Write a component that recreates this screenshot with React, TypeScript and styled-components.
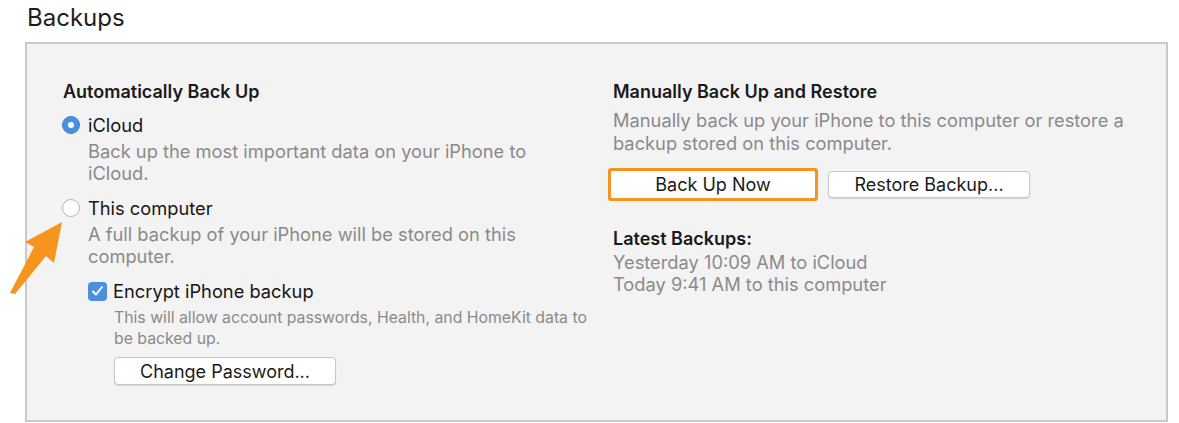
import React from "react";
import styled, { createGlobalStyle } from "styled-components";

const Global = createGlobalStyle`
  html, body { margin: 0; padding: 0; background: #ffffff; }
  body { font-family: Inter, "Liberation Sans", Arial, sans-serif; color: #1c1c1c; }
`;

const Page = styled.div`
  position: relative;
  width: 1179px;
  height: 423px;
  padding: 3px 0 0 27px;
  box-sizing: border-box;
`;

const Title = styled.h1`
  margin: 0;
  font-size: 24px;
  font-weight: 400;
  line-height: 30px;
  color: #1e1e1e;
`;

const Panel = styled.div`
  margin: 9px 0 0 -2px;
  width: 1143px;
  height: 380px;
  box-sizing: border-box;
  border: 2px solid #c9c9c9;
  background: #f3f3f3;
  padding: 36px 0 0 35px;
  display: grid;
  grid-template-columns: 550px 1fr;
`;

const Column = styled.div`
  display: flex;
  flex-direction: column;
`;

const Heading = styled.div`
  font-size: 18px;
  font-weight: 600;
  line-height: 24px;
  color: #1a1a1a;
  margin-left: 1px;
`;

const OptionRow = styled.div<{ $top: number }>`
  display: flex;
  align-items: center;
  gap: 8px;
  margin-top: ${(p) => p.$top}px;
  font-size: 18.3px;
  line-height: 22px;
  color: #161616;
`;

const Radio = styled.span<{ $checked?: boolean }>`
  width: 18px;
  height: 18px;
  border-radius: 50%;
  box-sizing: border-box;
  display: inline-flex;
  align-items: center;
  justify-content: center;
  background: ${(p) => (p.$checked ? "#4b8fde" : "#ffffff")};
  border: 1px solid ${(p) => (p.$checked ? "#3f82d3" : "#b5b5b5")};
  &::after {
    content: "";
    display: ${(p) => (p.$checked ? "block" : "none")};
    width: 6px;
    height: 6px;
    border-radius: 50%;
    background: #ffffff;
  }
`;

const Desc = styled.div<{ $indent: number; $size?: number; $lh?: number; $top?: number }>`
  margin-left: ${(p) => p.$indent}px;
  margin-top: ${(p) => p.$top ?? 0}px;
  font-size: ${(p) => p.$size ?? 18.3}px;
  line-height: ${(p) => p.$lh ?? 22}px;
  color: #8a8a8a;
`;

const CheckRow = styled.div`
  display: flex;
  align-items: center;
  gap: 6px;
  margin: 13px 0 0 26px;
  font-size: 18.3px;
  line-height: 22px;
  color: #161616;
`;

const CheckBox = styled.span`
  width: 19px;
  height: 19px;
  border-radius: 4px;
  background: #4b8fde;
  display: inline-flex;
  align-items: center;
  justify-content: center;
`;

const Button = styled.button<{ $w: number; $h?: number; $focus?: boolean }>`
  width: ${(p) => p.$w}px;
  height: ${(p) => p.$h ?? 27}px;
  box-sizing: border-box;
  background: #ffffff;
  border: 1px solid ${(p) => (p.$focus ? "#ffffff" : "#c6c6c6")};
  font-family: Inter, "Liberation Sans", Arial, sans-serif;
  font-size: 18px;
  color: #1a1a1a;
  padding: 0;
  box-shadow: ${(p) =>
    p.$focus ? "0 0 0 3px #f7941e" : "0 1px 1px rgba(0,0,0,0.12)"};
  border-radius: ${(p) => (p.$focus ? "1px" : "4px")};
`;

const ButtonRow = styled.div<{ $indent?: number; $top?: number }>`
  display: flex;
  gap: 13px;
  margin-top: ${(p) => p.$top ?? 16}px;
  margin-left: ${(p) => p.$indent ?? -1}px;
`;

const SubHeading = styled(Heading)`
  margin-top: 29px;
`;

const Arrow = styled.svg`
  position: absolute;
  left: 0;
  top: 215px;
`;

export default function App() {
  return (
    <>
      <Global />
      <Page>
        <Title>Backups</Title>
        <Panel>
          <Column>
            <Heading>Automatically Back Up</Heading>
            <OptionRow $top={10}>
              <Radio $checked />
              iCloud
            </OptionRow>
            <Desc $indent={26} $top={4}>
              Back up the most important data on your iPhone to
              <br />
              iCloud.
            </Desc>
            <OptionRow $top={13}>
              <Radio />
              This computer
            </OptionRow>
            <Desc $indent={26} $top={4}>
              A full backup of your iPhone will be stored on this
              <br />
              computer.
            </Desc>
            <CheckRow>
              <CheckBox>
                <svg width="13" height="12" viewBox="0 0 13 12">
                  <path
                    d="M2 6.5 L5 9.5 L11 2"
                    fill="none"
                    stroke="#ffffff"
                    strokeWidth="2"
                    strokeLinecap="round"
                    strokeLinejoin="round"
                  />
                </svg>
              </CheckBox>
              Encrypt iPhone backup
            </CheckRow>
            <Desc $indent={52} $size={15.8} $lh={21} $top={5}>
              This will allow account passwords, Health, and HomeKit data to
              <br />
              be backed up.
            </Desc>
            <ButtonRow $indent={52} $top={8}>
              <Button $w={222} $h={28}>Change Password...</Button>
            </ButtonRow>
          </Column>
          <Column>
            <Heading>Manually Back Up and Restore</Heading>
            <Desc $indent={1} $lh={23} $top={5}>
              Manually back up your iPhone to this computer or restore a
              <br />
              backup stored on this computer.
            </Desc>
            <ButtonRow>
              <Button $w={204} $focus>
                Back Up Now
              </Button>
              <Button $w={202}>Restore Backup...</Button>
            </ButtonRow>
            <SubHeading>Latest Backups:</SubHeading>
            <Desc $indent={1} $top={0}>
              Yesterday 10:09 AM to iCloud
              <br />
              Today 9:41 AM to this computer
            </Desc>
          </Column>
        </Panel>
        <Arrow width="70" height="85" viewBox="0 215 70 85">
          <polygon
            points="62,222 25,242 34,247 10,293 15,294 46,256 54,263"
            fill="#f7941e"
          />
        </Arrow>
      </Page>
    </>
  );
}
